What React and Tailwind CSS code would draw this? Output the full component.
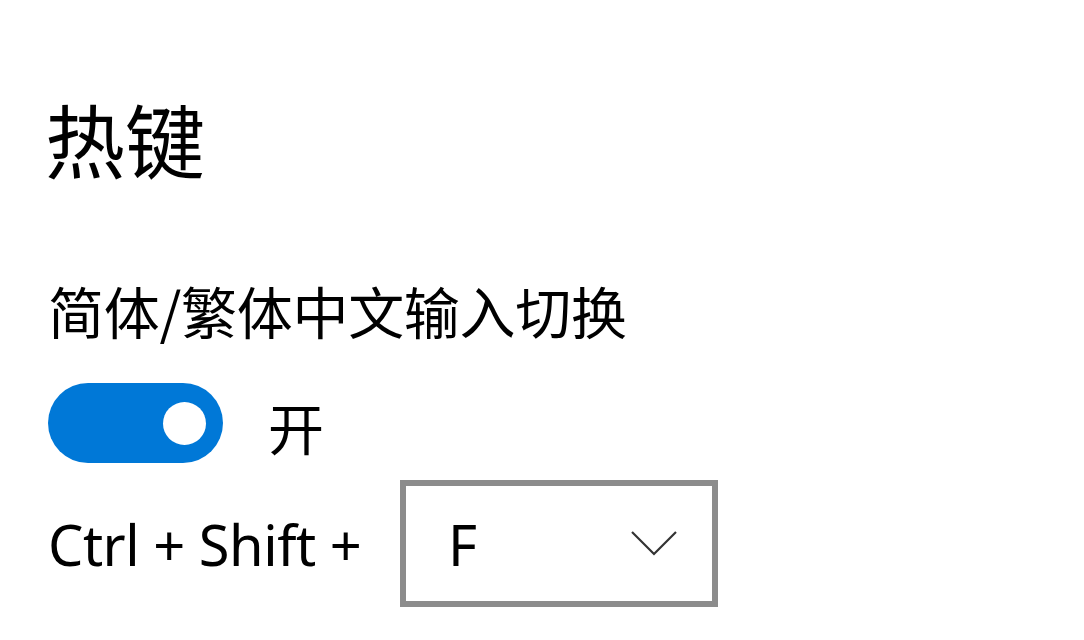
export default function App() {
  const font = { fontFamily: '"Noto Sans CJK SC", "Noto Sans", sans-serif' };
  return (
    <div className="w-[1084px] h-[640px] bg-white text-black overflow-hidden pl-[48px]" style={font}>
      <div className="pt-[97px] h-[177px] text-[80px] leading-[80px] -ml-[3px]">热键</div>
      <div className="mt-[105px] h-[56px] text-[56px] leading-[56px] tracking-[-0.3px]">简体/繁体中文输入切换</div>
      <div className="mt-[45px] flex items-center">
        <div className="w-[175px] h-[80px] rounded-full bg-[#0078d7] flex items-center justify-end pr-[17px]">
          <div className="w-[43px] h-[43px] rounded-full bg-white"></div>
        </div>
        <div className="ml-[45px] text-[56px] leading-[56px] mt-[6px]">开</div>
      </div>
      <div className="mt-[17px] flex items-center">
        <div className="text-[56px] leading-[56px] w-[352px] tracking-[-0.5px]" style={{ fontFamily: '"Noto Sans", sans-serif' }}>Ctrl + Shift +</div>
        <div className="w-[318px] h-[127px] border-[6px] border-[#8c8c8c] flex items-center justify-between pl-[42px] pr-[35px]">
          <span className="text-[56px] leading-[56px]" style={{ fontFamily: '"Noto Sans", sans-serif' }}>F</span>
          <svg width="46" height="25" viewBox="0 0 46 25" fill="none">
            <path d="M1 1 L23 23 L45 1" stroke="#333" strokeWidth="2.2" />
          </svg>
        </div>
      </div>
    </div>
  );
}
